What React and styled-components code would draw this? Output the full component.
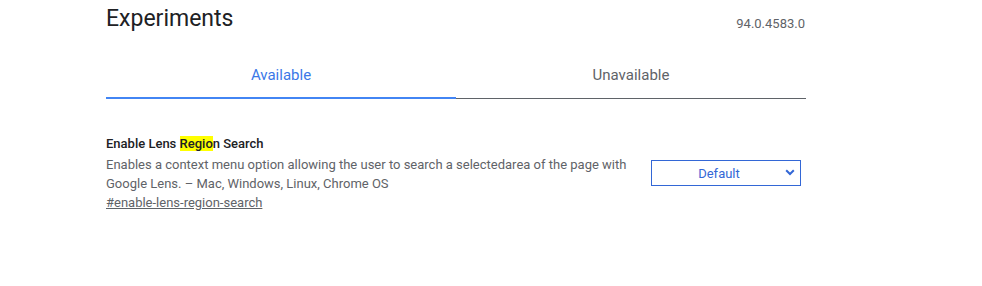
import React, { useState } from 'react'
import styled, { createGlobalStyle } from 'styled-components'

const GlobalStyle = createGlobalStyle`
  html, body {
    margin: 0;
    background: #fff;
  }
  body {
    font-family: Roboto, "Noto Sans", sans-serif;
  }
`

const Page = styled.div`
  width: 700px;
  margin-left: 106px;
`

const Header = styled.header`
  display: flex;
  justify-content: space-between;
  align-items: flex-end;
  height: 32px;
  padding-top: 3px;
`

const Title = styled.h1`
  margin: 0;
  font-size: 23px;
  font-weight: 400;
  color: #202124;
  line-height: 32px;
`

const Version = styled.span`
  font-size: 13px;
  color: #5f6368;
  margin-bottom: 4px;
  margin-right: 1px;
`

const TabBar = styled.div`
  display: flex;
  margin-top: 21px;
  border-bottom: 1px solid #5f6368;
`

const Tab = styled.button`
  flex: 1;
  border: 0;
  background: none;
  padding: 0;
  height: 43px;
  margin-bottom: -1px;
  font-family: inherit;
  font-size: 15px;
  color: ${p => (p.$active ? '#3b78e7' : '#5f6368')};
  border-bottom: ${p => (p.$active ? '2px solid #4285f4' : '2px solid transparent')};
  padding-bottom: 3px;
  cursor: pointer;
`

const FlagList = styled.div`
  padding-top: 36px;
`

const Flag = styled.div`
  display: flex;
  align-items: center;
  justify-content: space-between;
`

const FlagText = styled.div`
  max-width: 530px;
`

const FlagName = styled.h2`
  margin: 0;
  font-size: 13px;
  font-weight: 500;
  color: #202124;
  line-height: 17px;
`

const Highlight = styled.mark`
  background: #ffff00;
  color: inherit;
`

const Description = styled.p`
  margin: 3px 0 0;
  font-size: 13px;
  line-height: 19px;
  color: #5f6368;
`

const Permalink = styled.a`
  display: block;
  font-size: 13px;
  line-height: 19px;
  color: #5f6368;
  text-decoration: underline;
`

const SelectWrap = styled.div`
  position: relative;
  width: 150px;
  height: 26px;
  margin-right: 5px;
  margin-top: -1px;
`

const Select = styled.select`
  appearance: none;
  width: 100%;
  height: 100%;
  border: 1px solid #3367d6;
  border-radius: 0;
  background: #fff;
  color: #3367d6;
  font-family: inherit;
  font-size: 13px;
  text-align: center;
  text-align-last: center;
  padding: 0 14px 0 0;
`

const Chevron = styled.svg`
  position: absolute;
  right: 6px;
  top: 9px;
  pointer-events: none;
`

export default function App() {
  const [tab, setTab] = useState('available')
  return (
    <>
      <GlobalStyle />
      <Page>
        <Header>
          <Title>Experiments</Title>
          <Version>94.0.4583.0</Version>
        </Header>
        <TabBar>
          <Tab $active={tab === 'available'} onClick={() => setTab('available')}>Available</Tab>
          <Tab $active={tab === 'unavailable'} onClick={() => setTab('unavailable')}>Unavailable</Tab>
        </TabBar>
        <FlagList>
          <Flag>
            <FlagText>
              <FlagName>
                Enable Lens <Highlight>Regio</Highlight>n Search
              </FlagName>
              <Description>
                Enables a context menu option allowing the user to search a selectedarea of the page with
                Google Lens. – Mac, Windows, Linux, Chrome OS
              </Description>
              <Permalink href="#enable-lens-region-search">#enable-lens-region-search</Permalink>
            </FlagText>
            <SelectWrap>
              <Select defaultValue="Default">
                <option>Default</option>
                <option>Enabled</option>
                <option>Disabled</option>
              </Select>
              <Chevron width="10" height="7" viewBox="0 0 10 7">
                <path d="M1.2 1.3 L5 5 L8.8 1.3" fill="none" stroke="#3367d6" strokeWidth="2" />
              </Chevron>
            </SelectWrap>
          </Flag>
        </FlagList>
      </Page>
    </>
  )
}
